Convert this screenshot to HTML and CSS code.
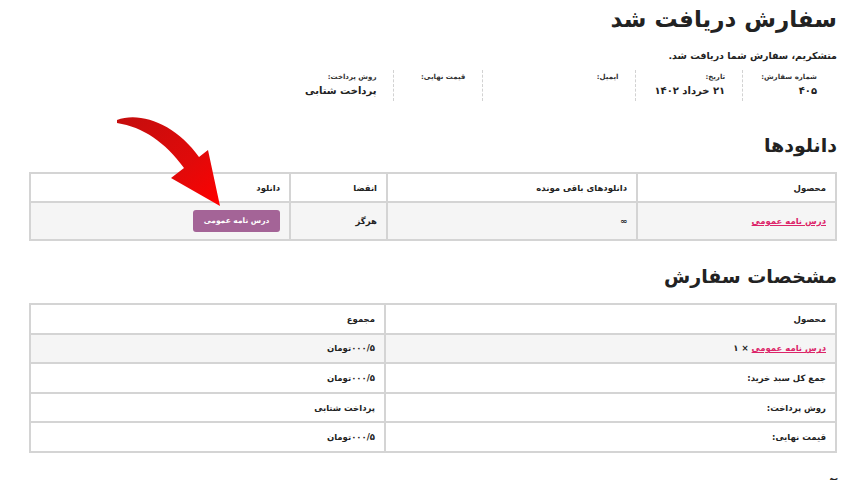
FILE: index.html
```html
<!DOCTYPE html>
<html lang="fa" dir="rtl">
<head>
<meta charset="utf-8">
<title>سفارش دریافت شد</title>
<link rel="stylesheet" href="styles.css">
</head>
<body>
<div class="page">
  <h1 class="title">سفارش دریافت شد</h1>
  <p class="thanks">متشکریم، سفارش شما دریافت شد.</p>
  <ul class="overview">
    <li class="ov ov-num"><span class="ov-label">شماره سفارش:</span><strong class="ov-value">۴۰۵</strong></li>
    <li class="ov ov-date"><span class="ov-label">تاریخ:</span><strong class="ov-value">۲۱ خرداد ۱۴۰۲</strong></li>
    <li class="ov ov-email"><span class="ov-label">ایمیل:</span><strong class="ov-value">&nbsp;</strong></li>
    <li class="ov ov-total"><span class="ov-label">قیمت نهایی:</span><strong class="ov-value">&nbsp;</strong></li>
    <li class="ov ov-method"><span class="ov-label">روش پرداخت:</span><strong class="ov-value">پرداخت شتابی</strong></li>
  </ul>

  <h2 class="section-title first">دانلودها</h2>
  <table class="tbl downloads">
    <colgroup><col class="c-prod"><col class="c-rem"><col class="c-exp"><col class="c-dl"></colgroup>
    <thead>
      <tr><th>محصول</th><th>دانلودهای باقی مونده</th><th>انقضا</th><th>دانلود</th></tr>
    </thead>
    <tbody>
      <tr class="alt"><td><a class="plink" href="#">درس نامه عمومی</a></td><td class="inf">∞</td><td>هرگز</td><td><a class="btn" href="#">درس نامه عمومی</a></td></tr>
    </tbody>
  </table>

  <h2 class="section-title second">مشخصات سفارش</h2>
  <table class="tbl details">
    <colgroup><col class="c-left"><col class="c-right"></colgroup>
    <thead>
      <tr><th>محصول</th><th>مجموع</th></tr>
    </thead>
    <tbody>
      <tr class="alt"><td><a class="plink" href="#">درس نامه عمومی</a> <strong>× ۱</strong></td><td><span class="num">۰۰۰/۵</span>تومان</td></tr>
      <tr><th>جمع کل سبد خرید:</th><td><span class="num">۰۰۰/۵</span>تومان</td></tr>
      <tr><th>روش پرداخت:</th><td>پرداخت شتابی</td></tr>
      <tr><th>قیمت نهایی:</th><td><span class="num">۰۰۰/۵</span>تومان</td></tr>
    </tbody>
  </table>

  <h2 class="section-title third">آدرس صورتحساب</h2>
</div>

<svg class="arrow" width="130" height="110" viewBox="105 105 130 110" aria-hidden="true">
  <defs>
    <linearGradient id="ag" x1="0" y1="0" x2="1" y2="1">
      <stop offset="0" stop-color="#c40d0d"/>
      <stop offset="0.6" stop-color="#e00a0a"/>
      <stop offset="1" stop-color="#ff0000"/>
    </linearGradient>
  </defs>
  <path d="M117,120 C140,111 176,124 199,157 L208,150 L220,206 L171,178 L184,168 C165,142 143,127 117,123 Z" fill="url(#ag)"/>
</svg>
</body>
</html>
```

FILE: styles.css
```css
html, body {
  margin: 0;
  padding: 0;
  background: #ffffff;
}
body {
  font-family: "DejaVu Sans", "Noto Sans", sans-serif;
  color: #222222;
  overflow: hidden;
  height: 480px;
  position: relative;
}
.page {
  width: 806px;
  margin: 0 17px 0 0;
  direction: rtl;
}
.title {
  margin: 0;
  padding-top: 3px;
  font-size: 23px;
  line-height: 32px;
  font-weight: bold;
  color: #222;
}
.thanks {
  margin: 14px 0 0 0;
  font-size: 9.5px;
  line-height: 14px;
  font-weight: bold;
}
.overview {
  list-style: none;
  margin: 7px 20px 0 0;
  padding: 0;
  display: flex;
  align-items: stretch;
}
.ov {
  display: flex;
  flex-direction: column;
  padding: 2px 0 3px 18px;
  margin-left: 17px;
  border-left: 1px dashed #d2d2d2;
  white-space: nowrap;
}
.ov-method { border-left: 0; }
.ov-date .ov-label { min-width: 57px; }
.ov-email .ov-label { width: 117px; }
.ov-total .ov-label { width: 53px; }
.ov-label {
  font-size: 7px;
  line-height: 10px;
  font-weight: bold;
  color: #333;
}
.ov-value {
  font-size: 10px;
  line-height: 15px;
  margin-top: 1px;
  font-weight: bold;
  color: #222;
}
.section-title {
  margin: 31px 0 0 0;
  font-size: 19px;
  line-height: 26px;
  font-weight: bold;
  color: #222;
}
.section-title.second { margin-top: 22px; }
.section-title.third { margin-top: 23px; }
.tbl {
  width: 806px;
  border-collapse: collapse;
  table-layout: fixed;
  margin-top: 14px;
  border: 2px solid #d4d4d4;
}
.details { margin-top: 14px; }
.tbl th, .tbl td {
  border: 2px solid #d4d4d4;
  text-align: right;
  padding: 0 9px;
  font-size: 8.5px;
  font-weight: bold;
  color: #222;
  height: 27px;
  vertical-align: middle;
  white-space: nowrap;
}
.downloads tbody td { height: 36px; }
.tbl tr.alt td { background: #f5f5f5; }
.c-prod { width: 199px; }
.c-rem { width: 250px; }
.c-exp { width: 97px; }
.c-dl { width: 260px; }
.c-left { width: 451px; }
.c-right { width: 355px; }
.details td, .details th { height: 27.6px; }
.plink {
  color: #dc2469;
  text-decoration: underline;
  font-weight: bold;
}
.inf {
  color: #555;
  font-weight: normal;
}
.num {
  direction: ltr;
  unicode-bidi: bidi-override;
}
.btn {
  display: inline-block;
  width: 87px;
  height: 22px;
  line-height: 22px;
  text-align: center;
  background: #a46497;
  color: #ffffff;
  text-decoration: none;
  border-radius: 3px;
  font-size: 7.5px;
  font-weight: bold;
}
.arrow {
  position: absolute;
  left: 105px;
  top: 105px;
}
```
